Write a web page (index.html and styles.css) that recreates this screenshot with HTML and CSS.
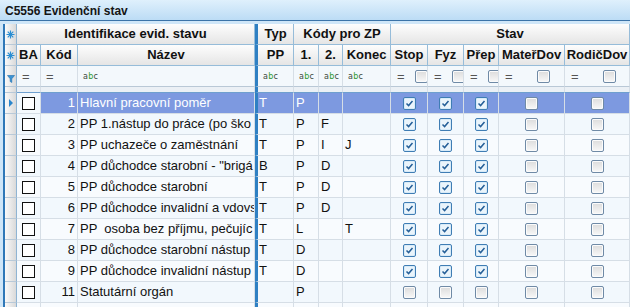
FILE: index.html
```html
<!DOCTYPE html>
<html>
  <head>
    <title>C5556 Evidenční stav</title>
    <link rel="stylesheet" href="styles.css">
  </head>

  <body>
    <div class="window">
      <div class="title">C5556 Evidenční stav</div>
      <div class="frame">
        <div class="grid">
          <!-- header row 1 -->
          <div class="row head">
            <div class="ind"><svg class="star" width="9" height="9" viewBox="0 0 9 9"><path d="M4.5 0.5V8.5M0.5 4.5H8.5M1.7 1.7L7.3 7.3M7.3 1.7L1.7 7.3" /></svg></div>
            <div class="span3">Identifikace evid. stavu</div>
            <div class="sep">Typ</div>
            <div class="span3">Kódy pro ZP</div>
            <div class="span5">Stav</div>
          </div>
          <!-- header row 2 -->
          <div class="row head">
            <div class="ind"><svg class="star" width="9" height="9" viewBox="0 0 9 9"><path d="M4.5 0.5V8.5M0.5 4.5H8.5M1.7 1.7L7.3 7.3M7.3 1.7L1.7 7.3" /></svg></div>
            <div>BA</div>
            <div>Kód</div>
            <div>Název</div>
            <div class="sep">PP</div>
            <div>1.</div>
            <div>2.</div>
            <div>Konec</div>
            <div>Stop</div>
            <div>Fyz</div>
            <div>Přep</div>
            <div>MateřDov</div>
            <div>RodičDov</div>
          </div>
          <!-- filter row -->
          <div class="row filter">
            <div class="ind"><svg class="funnel" width="8" height="8" viewBox="0 0 8 8"><path d="M0.5 0.5H7.5L4.8 3.8V7.5L3.2 6.5V3.8Z" /></svg></div>
            <div class="eq">=</div>
            <div class="eq">=</div>
            <div><span class="abc">a<b>b</b>c</span></div>
            <div class="sep"><span class="abc">a<b>b</b>c</span></div>
            <div><span class="abc">a<b>b</b>c</span></div>
            <div><span class="abc">a<b>b</b>c</span></div>
            <div><span class="abc">a<b>b</b>c</span></div>
            <div class="fchk"><span class="eq">=</span><span class="box"><span class="chk"></span></span></div>
            <div class="fchk"><span class="eq">=</span><span class="box"><span class="chk"></span></span></div>
            <div class="fchk"><span class="eq">=</span><span class="box"><span class="chk"></span></span></div>
            <div class="fchk"><span class="eq">=</span><span class="box"><span class="chk"></span></span></div>
            <div class="fchk"><span class="eq">=</span><span class="box"><span class="chk"></span></span></div>
          </div>
          <div class="row gap">
            <div class="ind"></div>
            <div></div><div></div><div></div>
            <div class="sep"></div>
            <div></div><div></div><div></div><div></div><div></div><div></div><div></div><div></div>
          </div>

          <!-- data rows -->
          <div class="row data current">
            <div class="ind"><span class="arrow"></span></div>
            <div class="c focus"><span class="sq"></span></div>
            <div class="num">1</div>
            <div class="txt">Hlavní pracovní poměr</div>
            <div class="txt sep">T</div>
            <div class="txt">P</div>
            <div class="txt"></div>
            <div class="txt"></div>
            <div class="c"><span class="chk on"></span></div>
            <div class="c"><span class="chk on"></span></div>
            <div class="c"><span class="chk on"></span></div>
            <div class="c"><span class="chk"></span></div>
            <div class="c"><span class="chk"></span></div>
          </div>
          <div class="row data">
            <div class="ind"></div>
            <div class="c"><span class="sq"></span></div>
            <div class="num">2</div>
            <div class="txt">PP 1.nástup do práce (po ško</div>
            <div class="txt sep">T</div>
            <div class="txt">P</div>
            <div class="txt">F</div>
            <div class="txt"></div>
            <div class="c"><span class="chk on"></span></div>
            <div class="c"><span class="chk on"></span></div>
            <div class="c"><span class="chk on"></span></div>
            <div class="c"><span class="chk"></span></div>
            <div class="c"><span class="chk"></span></div>
          </div>
          <div class="row data">
            <div class="ind"></div>
            <div class="c"><span class="sq"></span></div>
            <div class="num">3</div>
            <div class="txt">PP uchazeče o zaměstnání</div>
            <div class="txt sep">T</div>
            <div class="txt">P</div>
            <div class="txt">I</div>
            <div class="txt">J</div>
            <div class="c"><span class="chk on"></span></div>
            <div class="c"><span class="chk on"></span></div>
            <div class="c"><span class="chk on"></span></div>
            <div class="c"><span class="chk"></span></div>
            <div class="c"><span class="chk"></span></div>
          </div>
          <div class="row data">
            <div class="ind"></div>
            <div class="c"><span class="sq"></span></div>
            <div class="num">4</div>
            <div class="txt">PP důchodce starobní - "brigá</div>
            <div class="txt sep">B</div>
            <div class="txt">P</div>
            <div class="txt">D</div>
            <div class="txt"></div>
            <div class="c"><span class="chk on"></span></div>
            <div class="c"><span class="chk on"></span></div>
            <div class="c"><span class="chk on"></span></div>
            <div class="c"><span class="chk"></span></div>
            <div class="c"><span class="chk"></span></div>
          </div>
          <div class="row data">
            <div class="ind"></div>
            <div class="c"><span class="sq"></span></div>
            <div class="num">5</div>
            <div class="txt">PP důchodce starobní</div>
            <div class="txt sep">T</div>
            <div class="txt">P</div>
            <div class="txt">D</div>
            <div class="txt"></div>
            <div class="c"><span class="chk on"></span></div>
            <div class="c"><span class="chk on"></span></div>
            <div class="c"><span class="chk on"></span></div>
            <div class="c"><span class="chk"></span></div>
            <div class="c"><span class="chk"></span></div>
          </div>
          <div class="row data">
            <div class="ind"></div>
            <div class="c"><span class="sq"></span></div>
            <div class="num">6</div>
            <div class="txt">PP důchodce invalidní a vdovs</div>
            <div class="txt sep">T</div>
            <div class="txt">P</div>
            <div class="txt">D</div>
            <div class="txt"></div>
            <div class="c"><span class="chk on"></span></div>
            <div class="c"><span class="chk on"></span></div>
            <div class="c"><span class="chk on"></span></div>
            <div class="c"><span class="chk"></span></div>
            <div class="c"><span class="chk"></span></div>
          </div>
          <div class="row data">
            <div class="ind"></div>
            <div class="c"><span class="sq"></span></div>
            <div class="num">7</div>
            <div class="txt">PP  osoba bez příjmu, pečujíc</div>
            <div class="txt sep">T</div>
            <div class="txt">L</div>
            <div class="txt"></div>
            <div class="txt">T</div>
            <div class="c"><span class="chk on"></span></div>
            <div class="c"><span class="chk on"></span></div>
            <div class="c"><span class="chk on"></span></div>
            <div class="c"><span class="chk"></span></div>
            <div class="c"><span class="chk"></span></div>
          </div>
          <div class="row data">
            <div class="ind"></div>
            <div class="c"><span class="sq"></span></div>
            <div class="num">8</div>
            <div class="txt">PP důchodce starobní nástup</div>
            <div class="txt sep">T</div>
            <div class="txt">D</div>
            <div class="txt"></div>
            <div class="txt"></div>
            <div class="c"><span class="chk on"></span></div>
            <div class="c"><span class="chk on"></span></div>
            <div class="c"><span class="chk on"></span></div>
            <div class="c"><span class="chk"></span></div>
            <div class="c"><span class="chk"></span></div>
          </div>
          <div class="row data">
            <div class="ind"></div>
            <div class="c"><span class="sq"></span></div>
            <div class="num">9</div>
            <div class="txt">PP důchodce invalidní nástup</div>
            <div class="txt sep">T</div>
            <div class="txt">D</div>
            <div class="txt"></div>
            <div class="txt"></div>
            <div class="c"><span class="chk on"></span></div>
            <div class="c"><span class="chk on"></span></div>
            <div class="c"><span class="chk on"></span></div>
            <div class="c"><span class="chk"></span></div>
            <div class="c"><span class="chk"></span></div>
          </div>
          <div class="row data">
            <div class="ind"></div>
            <div class="c"><span class="sq"></span></div>
            <div class="num">11</div>
            <div class="txt">Statutární orgán</div>
            <div class="txt sep"></div>
            <div class="txt">P</div>
            <div class="txt"></div>
            <div class="txt"></div>
            <div class="c"><span class="chk"></span></div>
            <div class="c"><span class="chk"></span></div>
            <div class="c"><span class="chk"></span></div>
            <div class="c"><span class="chk"></span></div>
            <div class="c"><span class="chk"></span></div>
          </div>
          <div class="row data">
            <div class="ind"></div>
            <div></div><div></div><div></div>
            <div class="sep"></div>
            <div></div><div></div><div></div><div></div><div></div><div></div><div></div><div></div>
          </div>
        </div>
      </div>
    </div>
  </body>
</html>
```

FILE: styles.css
```css
/* page */
body {
  margin: 0;
  width: 630px;
  height: 307px;
  overflow: hidden;
  background-color: #cfe6f8;
  font-family: "Liberation Sans", Arial, sans-serif;
}

.window {
  width: 630px;
}

/* window caption */
.title {
  height: 21px;
  box-sizing: border-box;
  padding: 4px 0 0 5px;
  background: linear-gradient(#dff0fc, #bcdcf5);
  border-bottom: 1px solid #3b73a8;
  font-size: 12px;
  font-weight: bold;
  line-height: 15px;
  color: #151515;
}

.frame {
  padding: 3px 0 0 3px;
  background-color: #cfe6f8;
}

.grid {
  border-left: 2px solid #2f78b8;
  background-color: #f4f9fd;
}

/* every row uses the same columns */
.row {
  display: grid;
  grid-template-columns: 12px 24px 37px 177px 39px 25px 24px 48px 37px 36px 35px 66px 65px;
  height: 21px;
}

.row > div {
  box-sizing: border-box;
  border-right: 1px solid #d6dee6;
  border-bottom: 1px solid #d6dee6;
  overflow: hidden;
  white-space: pre;
  min-width: 0;
}

.row > .sep {
  border-left: 3px solid #2f80c3;
}

.span3 {
  grid-column: span 3;
}

.span5 {
  grid-column: span 5;
}

/* row indicator column */
.row > .ind {
  background: linear-gradient(to right, #fafafa, #d9d9d9);
  border-right: 1px solid #8fb4d3;
  border-bottom: 1px solid #b8c9d8;
  display: flex;
  align-items: center;
  justify-content: center;
}

.star path {
  stroke: #2a8ed3;
  stroke-width: 1.2;
  fill: none;
}

.funnel path {
  fill: #3b93d4;
  stroke: #1f6fae;
  stroke-width: 0.6;
}

.filter > .ind {
  align-items: flex-end;
  padding-bottom: 3px;
}

.arrow {
  width: 0;
  height: 0;
  border-top: 4px solid transparent;
  border-bottom: 4px solid transparent;
  border-left: 4px solid #2b86cc;
}

/* column headers */
.head > div {
  background: linear-gradient(#fdfdfd, #e5e5e5);
  border-right-color: #96bcd9;
  border-bottom-color: #96bcd9;
  font-size: 13px;
  font-weight: bold;
  line-height: 20px;
  text-align: center;
  color: #111;
}

/* filter row */
.filter > div {
  background-color: #f3f8fc;
  border-bottom-color: #b9c8d6;
  display: flex;
  align-items: center;
  padding-left: 5px;
}

.filter > .ind {
  padding-left: 0;
}

.eq {
  font-size: 13px;
  color: #555;
  padding-left: 1px;
}

.abc {
  font-family: "DejaVu Sans", sans-serif;
  font-size: 8px;
  color: #3d4a3d;
  letter-spacing: 0.3px;
}

.abc b {
  font-weight: normal;
  color: #2f9a2f;
}

.fchk .eq {
  width: 18px;
  flex: none;
}

.fchk .box {
  flex: 1;
  min-width: 13px;
  display: flex;
  justify-content: center;
}

/* spacer between filter and data */
.row.gap {
  height: 6px;
}

.gap > div {
  background-color: #ebf0f5;
  border-bottom-color: #6e9fcf;
}

/* data rows */
.data > div {
  font-size: 13px;
  line-height: 20px;
  color: #111;
  background-color: #f2f8fd;
}

.data:nth-child(odd) > div {
  background-color: #f8fbfe;
}

.data > .num {
  text-align: right;
  padding-right: 2px;
}

.data > .txt {
  padding-left: 2px;
}

.data > .sep {
  padding-left: 1px;
}

.data > .c {
  display: flex;
  align-items: center;
  justify-content: center;
}

.data.current > div {
  background-color: #7d99e0;
  color: #fff;
}

.data.current > .focus {
  background-color: #f4f9fd;
}

.data.current > .ind {
  background: linear-gradient(to right, #fafafa, #d9d9d9);
}

/* plain square checkbox in BA column */
.sq {
  width: 13px;
  height: 13px;
  box-sizing: border-box;
  border: 1px solid #111;
  background-color: #fff;
}

/* themed checkbox */
.chk {
  width: 13px;
  height: 13px;
  flex: none;
  box-sizing: border-box;
  border: 1px solid #6f8aa6;
  border-radius: 2px;
  background: linear-gradient(#dcdcdc, #f8f8f8);
  box-shadow: inset 0 0 0 1px #fbfbfb;
}

.chk.on {
  border-color: #3f7db4;
  background: #eaf4fb url("data:image/svg+xml,%3Csvg xmlns='http://www.w3.org/2000/svg' width='11' height='11'%3E%3Cpath d='M2.5 5.5L4.6 7.6L8.5 3' fill='none' stroke='%23255f98' stroke-width='1.5'/%3E%3C/svg%3E") center no-repeat;
  box-shadow: inset 0 0 0 1px #d8ebf8;
}
```
